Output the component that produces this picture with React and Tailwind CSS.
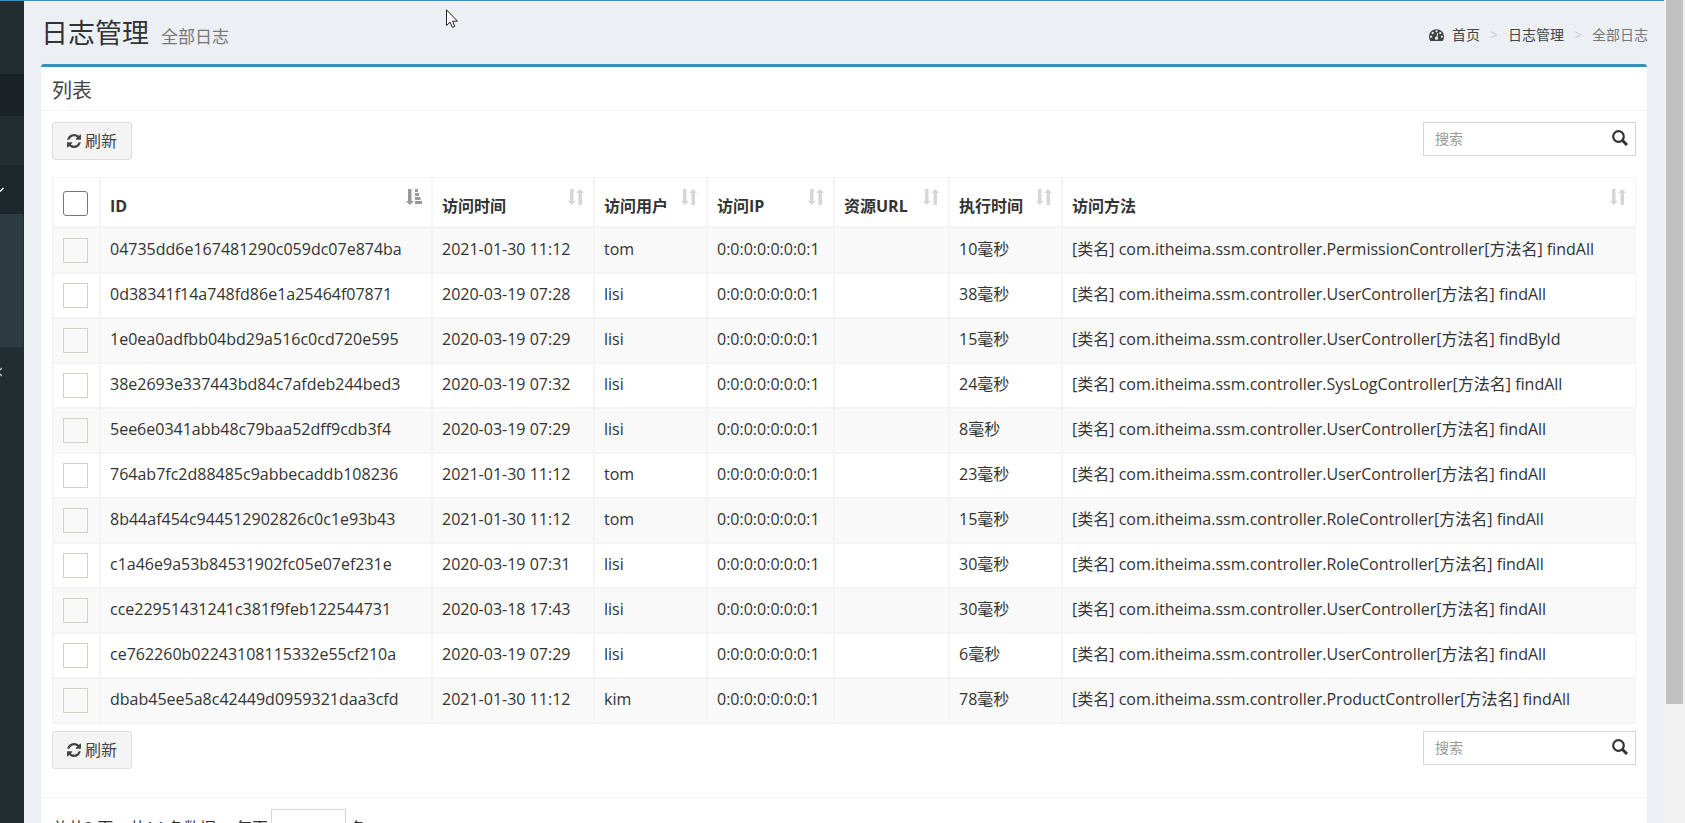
import clsx from "clsx";

const logs = [
  { id: "04735dd6e167481290c059dc07e874ba", time: "2021-01-30 11:12", user: "tom", cost: 10, controller: "PermissionController", method: "findAll" },
  { id: "0d38341f14a748fd86e1a25464f07871", time: "2020-03-19 07:28", user: "lisi", cost: 38, controller: "UserController", method: "findAll" },
  { id: "1e0ea0adfbb04bd29a516c0cd720e595", time: "2020-03-19 07:29", user: "lisi", cost: 15, controller: "UserController", method: "findById" },
  { id: "38e2693e337443bd84c7afdeb244bed3", time: "2020-03-19 07:32", user: "lisi", cost: 24, controller: "SysLogController", method: "findAll" },
  { id: "5ee6e0341abb48c79baa52dff9cdb3f4", time: "2020-03-19 07:29", user: "lisi", cost: 8, controller: "UserController", method: "findAll" },
  { id: "764ab7fc2d88485c9abbecaddb108236", time: "2021-01-30 11:12", user: "tom", cost: 23, controller: "UserController", method: "findAll" },
  { id: "8b44af454c944512902826c0c1e93b43", time: "2021-01-30 11:12", user: "tom", cost: 15, controller: "RoleController", method: "findAll" },
  { id: "c1a46e9a53b84531902fc05e07ef231e", time: "2020-03-19 07:31", user: "lisi", cost: 30, controller: "RoleController", method: "findAll" },
  { id: "cce22951431241c381f9feb122544731", time: "2020-03-18 17:43", user: "lisi", cost: 30, controller: "UserController", method: "findAll" },
  { id: "ce762260b02243108115332e55cf210a", time: "2020-03-19 07:29", user: "lisi", cost: 6, controller: "UserController", method: "findAll" },
  { id: "dbab45ee5a8c42449d0959321daa3cfd", time: "2021-01-30 11:12", user: "kim", cost: 78, controller: "ProductController", method: "findAll" },
];

const columns = [
  { title: "ID", width: "w-[332px]", sorted: true },
  { title: "访问时间", width: "w-[162px]" },
  { title: "访问用户", width: "w-[113px]" },
  { title: "访问IP", width: "w-[127px]" },
  { title: "资源URL", width: "w-[115px]" },
  { title: "执行时间", width: "w-[113px]" },
  { title: "访问方法", width: "" },
];

const RefreshIcon = () => (
  <svg viewBox="0 0 1536 1536" className="size-[14px]" fill="currentColor" aria-hidden="true">
    <path d="M1511 928q0 5-1 7-64 268-268 434.500t-478 166.500q-146 0-282.500-55t-243.500-157l-129 129q-19 19-45 19t-45-19-19-45v-448q0-26 19-45t45-19h448q26 0 45 19t19 45-19 45l-137 137q71 66 161 102t187 36q134 0 250-65t186-179q11-17 53-117 8-23 30-23h192q13 0 22.500 9.500t9.500 22.500zm25-800v448q0 26-19 45t-45 19h-448q-26 0-45-19t-19-45 19-45l138-138q-148-137-349-137-134 0-250 65t-186 179q-11 17-53 117-8 23-30 23h-199q-13 0-22.500-9.500t-9.500-22.500v-7q65-268 270-434.500t480-166.500q146 0 284 55.500t245 156.500l130-129q19-19 45-19t45 19 19 45z" />
  </svg>
);

const DashboardIcon = () => (
  <svg viewBox="0 0 1792 1792" className="size-[15px]" fill="currentColor" aria-hidden="true">
    <path d="M384 1152q0-53-37.500-90.500t-90.500-37.500-90.500 37.500-37.500 90.500 37.500 90.500 90.500 37.500 90.500-37.500 37.500-90.500zm192-448q0-53-37.500-90.500t-90.500-37.500-90.500 37.500-37.500 90.500 37.500 90.500 90.500 37.500 90.500-37.500 37.500-90.500zm428 481l101-382q6-26-7.500-48.500t-38.500-29.500-48 6.500-30 39.500l-101 382q-60 5-107 43.500t-63 98.500q-20 77 20 146t117 89 146-20 89-117q16-60-6-117t-72-91zm660-33q0-53-37.500-90.500t-90.500-37.500-90.500 37.500-37.500 90.500 37.500 90.500 90.500 37.500 90.500-37.500 37.500-90.500zm-640-640q0-53-37.500-90.500t-90.500-37.500-90.500 37.500-37.500 90.500 37.500 90.500 90.500 37.500 90.500-37.500 37.500-90.500zm448 192q0-53-37.500-90.500t-90.500-37.500-90.500 37.500-37.500 90.500 37.500 90.500 90.500 37.500 90.500-37.500 37.500-90.500zm320 448q0 261-141 483-19 29-54 29h-1402q-35 0-54-29-141-221-141-483 0-182 71-348t191-286 286-191 348-71 348 71 286 191 191 286 71 348z" />
  </svg>
);

const SearchIcon = () => (
  <svg viewBox="0 0 16 16" className="size-4" fill="none" stroke="currentColor" aria-hidden="true">
    <circle cx="6.500" cy="6.500" r="5.300" strokeWidth="2.200" />
    <path d="M10.300 10.300 15 15" strokeWidth="3" />
  </svg>
);

const SortIcon = ({ sorted }) => (
  <svg viewBox="0 0 16 16" className={clsx("size-4", sorted ? "text-[#999]" : "text-[#d6d6d6]")} fill="currentColor" aria-hidden="true">
    <path d="M2 0h3.500v12H8l-4.200 4L0 12h2z" />
    {sorted ? (
      <path d="M9 0h3v3H9zM9 4h4v3H9zM9 8h5.500v3H9zM9 12h7v3H9z" />
    ) : (
      <path d="M10.500 16H14V4h2l-3.800-4L8 4h2.500z" />
    )}
  </svg>
);

const RefreshButton = () => (
  <button
    type="button"
    className="flex h-[38px] items-center gap-1 rounded-[3px] border border-[#ddd] bg-[#f4f4f4] px-[14px] text-[#444]"
  >
    <RefreshIcon />
    <span>刷新</span>
  </button>
);

const SearchBox = ({ id }) => (
  <div className="flex h-[34px] w-[213px] items-center border border-[#d2d6de] bg-white">
    <input
      id={id}
      type="text"
      aria-label="搜索"
      placeholder="搜索"
      className="h-full min-w-0 flex-1 px-[11px] pb-[2px] text-sm outline-none placeholder:text-[#999]"
    />
    <button type="button" aria-label="搜索" className="pr-[7px] pb-[2px] text-[#333]">
      <SearchIcon />
    </button>
  </div>
);

const Toolbar = ({ searchId }) => (
  <div className="flex items-start justify-between">
    <RefreshButton />
    <SearchBox id={searchId} />
  </div>
);

const Sidebar = () => (
  <aside className="w-6 shrink-0 overflow-hidden bg-[#222d32]">
    <div className="h-[73px]" />
    <div className="h-[42px] bg-[#1a2226]" />
    <div className="h-[49px]" />
    <div className="flex h-[49px] items-center bg-[#1e282c] text-white">
      <svg viewBox="0 0 4 6" className="h-[6px] w-1" fill="none" stroke="currentColor" aria-hidden="true">
        <path d="M0 4.500 3.500 1" strokeWidth="1.500" />
      </svg>
    </div>
    <div className="mr-px h-[133px] bg-[#2c3b41]" />
    <div className="flex h-[49px] items-center text-[#b8c7ce]">
      <svg viewBox="0 0 2 10" className="h-[10px] w-[2px]" fill="none" stroke="currentColor" aria-hidden="true">
        <path d="M0 3 2 1M0 7l2 2" strokeWidth="1.500" />
      </svg>
    </div>
  </aside>
);

const ContentHeader = () => (
  <header className="flex h-[63px] items-center justify-between pr-[16px] pl-[17px]">
    <h1 className="flex items-baseline gap-3 pt-[5px] text-[27px] leading-8 text-[#333]">
      日志管理
      <small className="text-[17px] text-[#777]">全部日志</small>
    </h1>
    <nav aria-label="breadcrumb" className="pt-1">
      <ol className="flex items-center text-sm text-[#444]">
        <li>
          <a href="#home" className="flex items-center gap-2">
            <DashboardIcon />
            首页
          </a>
        </li>
        <li className="px-[10px] text-[#ccc]" aria-hidden="true">&gt;</li>
        <li>
          <a href="#logs">日志管理</a>
        </li>
        <li className="px-[10px] text-[#ccc]" aria-hidden="true">&gt;</li>
        <li className="text-[#777]">全部日志</li>
      </ol>
    </nav>
  </header>
);

const LogTable = () => (
  <table className="w-full table-fixed border-separate border-spacing-0 border-t border-l-2 border-[#f4f4f4] text-left whitespace-nowrap">
    <thead>
      <tr>
        <th className="h-[51px] w-[47px] border-r-2 border-b-3 border-[#f4f4f4] pt-[2px] pl-[9px]">
          <input
            type="checkbox"
            aria-label="全选"
            className="block size-[25px] appearance-none rounded-[3px] border border-[#767676] bg-white"
          />
        </th>
        {columns.map((col) => (
          <th
            key={col.title}
            className={clsx("border-r-2 border-b-3 border-[#f4f4f4] px-[9px] pt-[11px] align-top font-bold last:border-r", col.width)}
          >
            <div className="flex items-start justify-between">
              <span className="pt-[5px]">{col.title}</span>
              <SortIcon sorted={col.sorted} />
            </div>
          </th>
        ))}
      </tr>
    </thead>
    <tbody>
      {logs.map((log) => (
        <tr
          key={log.id}
          className="odd:bg-[#f9f9f9] *:h-[45px] *:border-r-2 *:border-b-2 *:border-[#f4f4f4] *:px-[9px] *:not-first:pb-1 *:last:border-r"
        >
          <td>
            <input
              type="checkbox"
              aria-label={log.id}
              className="block size-[25px] appearance-none border border-[#d4d0c8]"
            />
          </td>
          <td>{log.id}</td>
          <td>{log.time}</td>
          <td>{log.user}</td>
          <td>0:0:0:0:0:0:0:1</td>
          <td />
          <td>{log.cost}毫秒</td>
          <td>
            [类名] com.itheima.ssm.controller.{log.controller}[方法名] {log.method}
          </td>
        </tr>
      ))}
    </tbody>
  </table>
);

const Cursor = () => (
  <svg viewBox="0 0 12 19" className="absolute top-[9px] left-[446px] h-[19px] w-3" aria-hidden="true">
    <path d="M.5.800v15.700l3.600-3.400 2.300 5.300 2.400-1-2.300-5.200h5z" fill="#fff" stroke="#222" />
  </svg>
);

export default function App() {
  return (
    <div className="relative flex h-screen overflow-hidden font-['Open_Sans','Noto_Sans_CJK_SC',sans-serif] text-base text-[#333]">
      <div className="flex min-w-0 flex-1 flex-col">
        <div className="h-px shrink-0 bg-[#3c8dbc]" />
        <div className="flex min-h-0 flex-1">
          <Sidebar />
          <main className="min-w-0 flex-1 bg-[#ecf0f5]">
            <ContentHeader />
            <section className="mx-[17px] rounded-[3px] border-t-3 border-[#3c8dbc] bg-white shadow-[0_1px_1px_rgba(0,0,0,0.1)]">
              <h3 className="flex h-[44px] items-center border-b border-[#f4f4f4] px-[11px] pt-1 text-xl text-[#444]">列表</h3>
              <div className="px-[11px] pt-[11px]">
                <Toolbar searchId="search-top" />
                <div className="pt-[17px] pb-[7px]">
                  <LogTable />
                </div>
                <Toolbar searchId="search-bottom" />
              </div>
              <footer className="mt-7 flex items-center gap-[3px] border-t border-[#f4f4f4] px-[11px] pt-[11px]">
                <label htmlFor="page-size" className="whitespace-pre">总共2 页，共14 条数据。 每页</label>
                <select id="page-size" defaultValue="" className="h-[38px] w-[75px] appearance-none border border-[#d2d6de] bg-white px-3">
                  <option value="" />
                  <option>10</option>
                  <option>20</option>
                </select>
                <span className="pl-px">条</span>
              </footer>
            </section>
          </main>
        </div>
      </div>
      <div className="w-[21px] shrink-0 bg-[#f1f1f1] px-[2px]">
        <div className="h-[704px] bg-[#c1c1c1]" />
      </div>
      <Cursor />
    </div>
  );
}
